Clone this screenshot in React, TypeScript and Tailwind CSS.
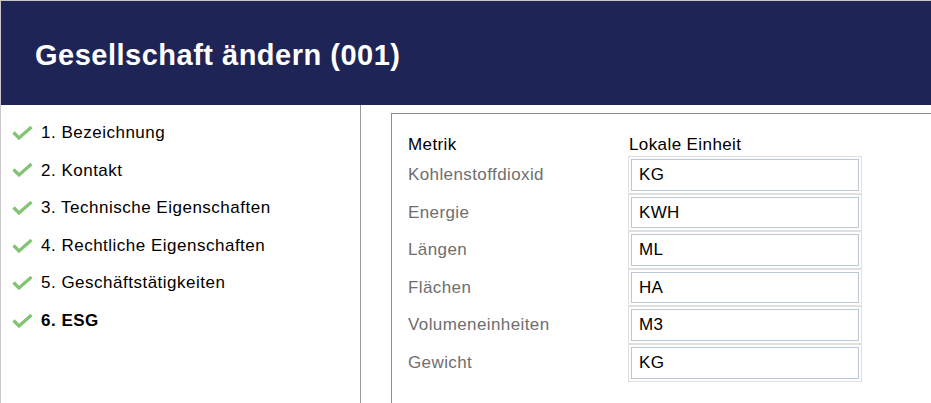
const steps = [
  { label: '1. Bezeichnung' },
  { label: '2. Kontakt' },
  { label: '3. Technische Eigenschaften' },
  { label: '4. Rechtliche Eigenschaften' },
  { label: '5. Geschäftstätigkeiten' },
  { label: '6. ESG', active: true },
]

const metrics = [
  { name: 'Kohlenstoffdioxid', unit: 'KG' },
  { name: 'Energie', unit: 'KWH' },
  { name: 'Längen', unit: 'ML' },
  { name: 'Flächen', unit: 'HA' },
  { name: 'Volumeneinheiten', unit: 'M3' },
  { name: 'Gewicht', unit: 'KG' },
]

function Check() {
  return (
    <svg width="21" height="14" viewBox="0 0 21 14" className="shrink-0">
      <path d="M1.5 6.5 L7 12 L19.5 1" fill="none" stroke="#82c474" strokeWidth="3.2" strokeLinecap="butt" strokeLinejoin="miter" />
    </svg>
  )
}

export default function App() {
  return (
    <div className="w-[931px] h-[403px] overflow-hidden bg-white border-t border-l border-[#c8c8c8] font-['Liberation_Sans',Arial,sans-serif] flex flex-col">
      <div className="h-[104px] shrink-0 bg-[#1f2456] flex items-center pl-[34px] pt-[4px]">
        <h1 className="text-white font-bold text-[29px] tracking-[0.5px] leading-none">Gesellschaft ändern (001)</h1>
      </div>

      <div className="flex flex-1 min-h-0">
        <div className="w-[360px] shrink-0 border-r border-[#9a9a9a] pt-[9px] pl-[11px]">
          {steps.map((s) => (
            <div key={s.label} className="h-[37.6px] flex items-center gap-[8px]">
              <Check />
              <span className={`text-[17px] tracking-[0.5px] text-black ${s.active ? 'font-bold' : ''}`}>{s.label}</span>
            </div>
          ))}
        </div>

        <div className="flex-1 pl-[30px] pt-[8px]">
          <div className="h-full border-t border-l border-[#8c8c8c] pl-[16px] pt-[20px]">
            <div className="flex h-[22px] items-center text-[17px] tracking-[0.4px] text-black">
              <span className="w-[221px]">Metrik</span>
              <span>Lokale Einheit</span>
            </div>
            {metrics.map((m, i) => (
              <div key={i} className="flex h-[37.6px] items-center">
                <span className="w-[220px] text-[17px] tracking-[0.4px] text-[#6e6e6e]">{m.name}</span>
                <div className="w-[234px] h-full border border-[#e0e0e0] p-[2px]">
                  <div className="h-full border border-[#bcc8d6] flex items-center px-[7px] text-[17px] tracking-[0.3px] text-black">
                    {m.unit}
                  </div>
                </div>
              </div>
            ))}
          </div>
        </div>
      </div>
    </div>
  )
}
